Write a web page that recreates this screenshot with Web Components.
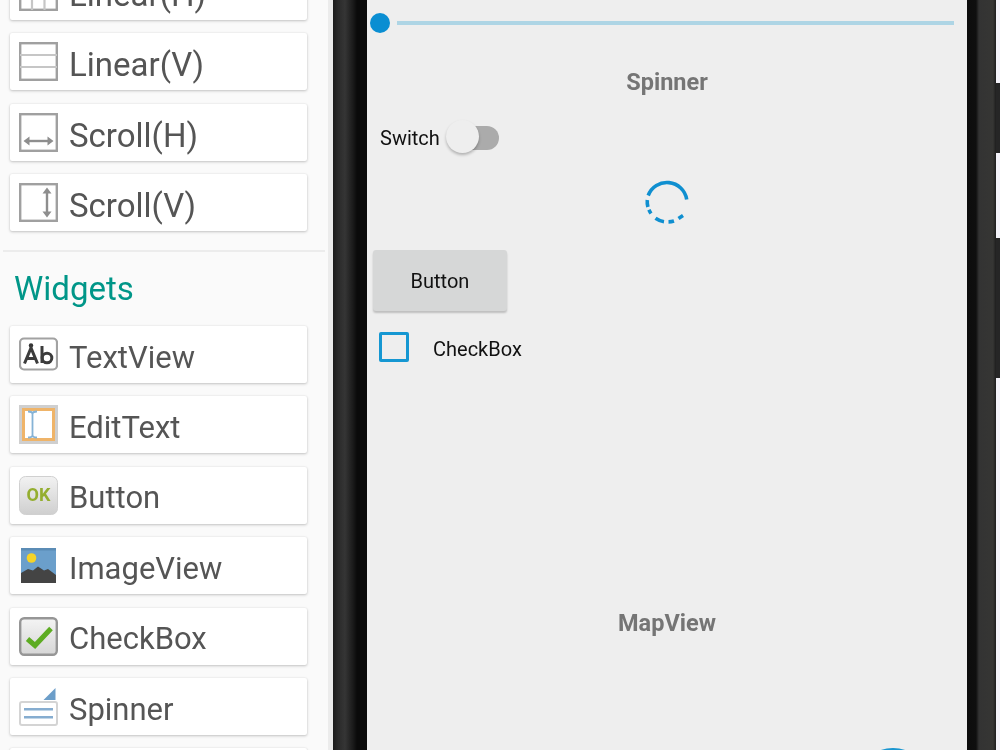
<!DOCTYPE html>
<html>
<head>
<meta charset="utf-8">
<style>
html, body { margin: 0; height: 100%; overflow: hidden; background: #fafafa; }
body { font-family: Roboto, "Liberation Sans", sans-serif; }
</style>
</head>
<body>
<builder-app>
    <widget-palette slot="palette">
	<palette-card large icon="linear-h">Linear(H)</palette-card>
	<palette-card large icon="linear-v">Linear(V)</palette-card>
	<palette-card large icon="scroll-h">Scroll(H)</palette-card>
	<palette-card large icon="scroll-v">Scroll(V)</palette-card>
	<palette-section>Widgets</palette-section>
	<palette-card icon="textview">TextView</palette-card>
	<palette-card icon="edittext">EditText</palette-card>
	<palette-card icon="button">Button</palette-card>
	<palette-card icon="imageview">ImageView</palette-card>
	<palette-card icon="checkbox">CheckBox</palette-card>
	<palette-card icon="spinner">Spinner</palette-card>
	<palette-card icon="none"></palette-card>
    </widget-palette>
    <phone-frame slot="phone">
	<seek-bar></seek-bar>
	<preview-label style="margin-top:34px">Spinner</preview-label>
	<switch-row>Switch</switch-row>
	<spin-ring></spin-ring>
	<flat-button>Button</flat-button>
	<check-row>CheckBox</check-row>
	<preview-label style="margin-top:246px">MapView</preview-label>
	<round-fab></round-fab>
    </phone-frame>
</builder-app>

<script>
class BaseElement extends HTMLElement {
    constructor () {
	super();

	this.attachShadow({ mode: "open" });
	this.shadowRoot.innerHTML	= `<style>\n${this.constructor.CSS}\n</style>` + this.render();
    }

    render () {
	return this.constructor.template;
    }
}

class BuilderApp extends BaseElement {
    static CSS			= `
:host {
  display: flex;
  width: 1000px;
  height: 750px;
  overflow: hidden;
  filter: blur(.45px);
}
.gutter {
  flex: 0 0 5px;
  background: #ececec;
}
`;
    static template		= `
<slot name="palette"></slot>
<div class="gutter"></div>
<slot name="phone"></slot>
`;
}

class WidgetPalette extends BaseElement {
    static CSS			= `
:host {
  display: flex;
  flex-direction: column;
  flex: 0 0 328px;
  box-sizing: border-box;
  background: #fafafa;
  padding: 0 0 0 10px;
  margin-top: -37px;
  height: 787px;
}
`;
    static template		= `<slot></slot>`;
}

const ICONS			= {
    "linear-h": `<rect x="1.200" y="1.200" width="36.600" height="36.600" fill="#fff" stroke="#a0a0a0" stroke-width="2.400"/><path d="M13 1v37M25.500 1v37" stroke="#c6c6c6" stroke-width="2.200"/>`,
    "linear-v": `<rect x="1.200" y="1.200" width="36.600" height="36.600" fill="#fff" stroke="#a0a0a0" stroke-width="2.400"/><path d="M1 13h37M1 25h37" stroke="#c6c6c6" stroke-width="2.200"/>`,
    "scroll-h": `<rect x="1.200" y="1.200" width="36.600" height="36.600" fill="#fff" stroke="#a0a0a0" stroke-width="2.400"/><path d="M8 28h23" stroke="#8e8e8e" stroke-width="2.400"/><path d="M4.500 28l6-4.500v9zM34.500 28l-6-4.500v9z" fill="#8e8e8e"/>`,
    "scroll-v": `<rect x="1.200" y="1.200" width="36.600" height="36.600" fill="#fff" stroke="#a0a0a0" stroke-width="2.400"/><path d="M28 8v23" stroke="#8e8e8e" stroke-width="2.400"/><path d="M28 4.500l-4.500 6h9zM28 34.500l-4.500-6h9z" fill="#8e8e8e"/>`,
    "textview": `<rect x="1" y="3.500" width="37" height="31" rx="4" fill="#fff" stroke="#a2a2a2" stroke-width="2.200"/><circle cx="12" cy="10.500" r="2.200" fill="#333"/><path d="M5.500 28.500L12 13 18.500 28.500M8 23.500h8" fill="none" stroke="#3c3c3c" stroke-width="3"/><path d="M23 11v17" stroke="#3c3c3c" stroke-width="3"/><circle cx="28" cy="23" r="4.800" fill="none" stroke="#3c3c3c" stroke-width="3"/>`,
    "edittext": `<rect x="0" y="0" width="39" height="39" fill="#cfcfcf"/><rect x="4.500" y="4.500" width="30" height="30" fill="#fff" stroke="#efb469" stroke-width="3"/><path d="M9 6.500c3 0 4.500 1 4.500 2.500v21c0 1.500-1.500 2.500-4.500 2.500M18 6.500c-3 0-4.500 1-4.500 2.500v21c0 1.500 1.500 2.500 4.500 2.500" fill="none" stroke="#86b3d6" stroke-width="1.800"/>`,
    "button": `<defs><linearGradient id="b" x1="0" y1="0" x2="0" y2="1"><stop offset="0" stop-color="#f2f2f2"/><stop offset="1" stop-color="#cfcfcf"/></linearGradient></defs><rect x="0.500" y="0.500" width="38" height="38" rx="6" fill="url(#b)" stroke="#d0d0d0"/><text x="19.500" y="25" font-family="Roboto, sans-serif" font-size="18" font-weight="700" fill="#94ae30" text-anchor="middle">OK</text>`,
    "imageview": `<rect x="2" y="2" width="35" height="35" fill="#6b9fcb"/><rect x="2" y="2" width="35" height="2.500" fill="#5b8cb5"/><circle cx="12.500" cy="12" r="4.800" fill="#f5d327"/><path d="M2 27l7-4 5 1.500 5-4 6 4 4-1.500 8 6V37H2z" fill="#444"/>`,
    "checkbox": `<defs><linearGradient id="c" x1="0" y1="0" x2="0" y2="1"><stop offset="0" stop-color="#f4f4f4"/><stop offset="1" stop-color="#d6d6d6"/></linearGradient></defs><rect x="1.200" y="1.200" width="36.600" height="36.600" rx="4" fill="url(#c)" stroke="#969696" stroke-width="2.400"/><path d="M8.500 22l7.500 6.500L32 11.500" fill="none" stroke="#5dac22" stroke-width="5"/>`,
    "spinner": `<path d="M36.500 1v12H24.500z" fill="#6c9ec9"/><rect x="1" y="15" width="37" height="23" rx="2" fill="#fff" stroke="#d4d4d4" stroke-width="2"/><path d="M5 22.300h29M5 30.300h29" stroke="#86add0" stroke-width="2.400"/>`,
    "none": "",
};

class PaletteCard extends BaseElement {
    static CSS			= `
:host {
  display: flex;
  align-items: center;
  box-sizing: border-box;
  width: 297px;
  height: 57px;
  flex: none;
  margin-bottom: 13.400px;
  padding-left: 9px;
  gap: 11px;
  background: #fff;
  border-radius: 2px;
  box-shadow: 0 1px 3px rgba(0,0,0,.22), 0 0 2px rgba(0,0,0,.07);
  color: #555;
  font-size: 31px;
  white-space: nowrap;
}
:host([large]) {
  font-size: 33px;
}
slot {
  display: block;
  padding-top: 5px;
}
:host([large]) slot {
  padding-top: 6px;
}
svg {
  flex: none;
  display: block;
}
`;
    render () {
	const shape		= ICONS[ this.getAttribute("icon") ] || "";
	return `<svg width="39" height="39" viewBox="0 0 39 39">${shape}</svg><slot></slot>`;
    }
}

class PaletteSection extends BaseElement {
    static CSS			= `
:host {
  display: block;
  flex: none;
  box-sizing: border-box;
  width: 322px;
  height: 76.500px;
  margin: 5px 0 0 -7px;
  padding: 18px 0 0 11px;
  border-top: 2px solid #ececec;
  color: #009688;
  font-size: 33px;
  line-height: 38px;
}
`;
    static template		= `<slot></slot>`;
}

class PhoneFrame extends BaseElement {
    static CSS			= `
:host {
  display: flex;
  flex: 1 1 auto;
  height: 750px;
}
.bezel-l {
  flex: 0 0 34px;
  background: linear-gradient(90deg, #1c1c1c 0, #2a2a2a 5px, #353535 12px, #1a1a1a 20px, #0a0a0a 24px, #0a0a0a 100%);
}
.screen {
  flex: 0 0 600px;
  display: flex;
  flex-direction: column;
  position: relative;
  box-sizing: border-box;
  padding-top: 13px;
  background: #eeeeee;
  overflow: hidden;
}
.bezel-r {
  flex: 0 0 29px;
  background: linear-gradient(90deg, #0c0c0c 0, #0f0f0f 9px, #333 12px, #363634 26px, #1e1e1e 100%);
}
.edge {
  flex: 1 1 auto;
  display: flex;
  flex-direction: column;
}
.edge div {
  background: #f4f3fa;
}
.edge div:nth-child(even) {
  background: #262626;
}
`;
    static template		= `
<div class="bezel-l"></div>
<div class="screen"><slot></slot></div>
<div class="bezel-r"></div>
<div class="edge">
    <div style="height:83px"></div>
    <div style="height:70px"></div>
    <div style="height:85px"></div>
    <div style="height:140px"></div>
    <div style="height:372px"></div>
</div>
`;
}

class SeekBar extends BaseElement {
    static CSS			= `
:host {
  display: flex;
  align-items: center;
  height: 20px;
  padding: 0 13px 0 3px;
  gap: 7px;
}
.thumb {
  width: 20px;
  height: 20px;
  border-radius: 50%;
  background: #0a8ed2;
}
.track {
  flex: 1;
  height: 3.500px;
  background: #aed5e5;
}
`;
    static template		= `<div class="thumb"></div><div class="track"></div>`;
}

class PreviewLabel extends BaseElement {
    static CSS			= `
:host {
  display: block;
  height: 30px;
  line-height: 30px;
  text-align: center;
  color: #757575;
  font-size: 23.500px;
  font-weight: 700;
}
`;
    static template		= `<slot></slot>`;
}

class SwitchRow extends BaseElement {
    static CSS			= `
:host {
  display: flex;
  align-items: center;
  height: 36px;
  margin-top: 23px;
  padding-left: 13px;
  color: #111;
  font-size: 20px;
}
.switch {
  position: relative;
  width: 53px;
  height: 36px;
  margin-left: 6px;
  display: flex;
  align-items: center;
}
.track {
  margin-left: 16px;
  width: 37px;
  height: 24px;
  border-radius: 0 12px 12px 0;
  background: #ababab;
}
.thumb {
  position: absolute;
  left: 0;
  top: 0;
  width: 33px;
  height: 33px;
  border-radius: 50%;
  background: #eeeeee;
  box-shadow: 0 2px 3px rgba(0,0,0,.25);
}
`;
    static template		= `<slot></slot><div class="switch"><div class="track"></div><div class="thumb"></div></div>`;
}

class SpinRing extends BaseElement {
    static CSS			= `
:host {
  display: flex;
  justify-content: center;
  height: 44px;
  margin-top: 24px;
}
`;
    static template		= `
<svg width="44" height="44" viewBox="0 0 44 44" fill="none" stroke="#0f8fd0" stroke-width="3.600">
    <path d="M41.700 19.500A20 20 0 0 0 3.200 15.500"/>
    <path d="M2.300 20A20 20 0 0 0 6 33.500" stroke-dasharray="7 3"/>
    <path d="M10.500 38.300A20 20 0 0 0 19 41.700"/>
    <path d="M23.500 41.900A20 20 0 0 0 29 41"/>
    <path d="M33.500 38.500L38 35.500"/>
</svg>
`;
}

class FlatButton extends BaseElement {
    static CSS			= `
:host {
  display: flex;
  align-items: center;
  justify-content: center;
  box-sizing: border-box;
  width: 134px;
  height: 61px;
  margin: 26px 0 0 6px;
  border-radius: 3px;
  background: #d6d7d7;
  box-shadow: 0 2px 2px rgba(0,0,0,.2);
  color: #111;
  font-size: 20px;
}
`;
    static template		= `<slot></slot>`;
}

class CheckRow extends BaseElement {
    static CSS			= `
:host {
  display: flex;
  align-items: center;
  height: 30px;
  margin-top: 21px;
  padding-left: 12px;
  color: #111;
  font-size: 20px;
}
.box {
  box-sizing: border-box;
  width: 30px;
  height: 30px;
  border: 3px solid #1597d2;
  border-radius: 2px;
  margin-right: 24px;
}
slot {
  display: block;
  padding-top: 3px;
}
`;
    static template		= `<div class="box"></div><slot></slot>`;
}

class RoundFab extends BaseElement {
    static CSS			= `
:host {
  position: absolute;
  left: 488px;
  top: 748px;
  width: 76px;
  height: 76px;
  border-radius: 50%;
  background: #1a96d0;
}
`;
    static template		= ``;
}

customElements.define("builder-app", BuilderApp );
customElements.define("widget-palette", WidgetPalette );
customElements.define("palette-card", PaletteCard );
customElements.define("palette-section", PaletteSection );
customElements.define("phone-frame", PhoneFrame );
customElements.define("seek-bar", SeekBar );
customElements.define("preview-label", PreviewLabel );
customElements.define("switch-row", SwitchRow );
customElements.define("spin-ring", SpinRing );
customElements.define("flat-button", FlatButton );
customElements.define("check-row", CheckRow );
customElements.define("round-fab", RoundFab );
</script>
</body>
</html>
